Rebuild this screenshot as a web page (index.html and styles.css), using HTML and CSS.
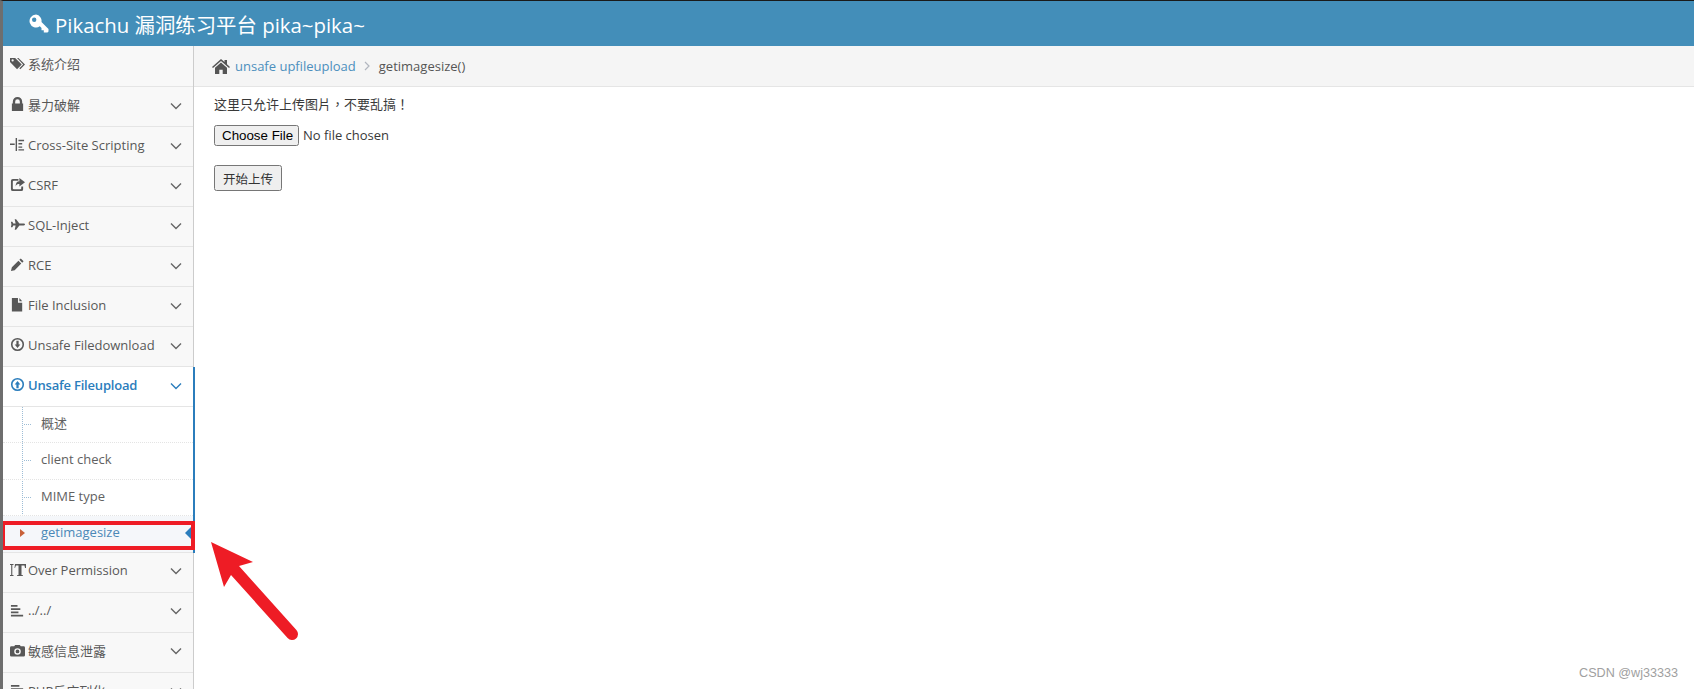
FILE: index.html
```html
<!DOCTYPE html>
<html lang="en">
<head>
  <meta charset="UTF-8">
  <meta name="viewport" content="width=device-width, initial-scale=1.0">
  <title>Pikachu</title>
  <link rel="stylesheet" href="styles.css">
</head>
<body>
  <div class="navbar">
    <svg class="key-icon" viewBox="0 0 20 20"><path d="M7 .5a6.500 6.500 0 1 0 3.800 11.800l1.700 1.700v2.200h2.300v2.300h3.700l1-1v-2.500l-7-6.900A6.500 6.500 0 0 0 7 .5zM5.200 3.500a2.200 2.200 0 1 1 0 4.400 2.200 2.200 0 0 1 0-4.400z" fill="#fff" fill-rule="evenodd"/></svg>
    <span>Pikachu 漏洞练习平台 pika~pika~</span>
  </div>

  <div class="layout">
    <div class="sidebar">
      <a class="nav-item first">
        <svg class="icon" viewBox="0 0 16 16"><path d="M0 2h5.500l7 7-5 5-7.500-7.500zM2.800 3.500a1.200 1.200 0 1 0 0 2.400 1.200 1.200 0 0 0 0-2.400zM7.500 2h1.500l7 7-5 5-1-1 4-4z" fill-rule="evenodd"/></svg>
        <span>系统介绍</span>
      </a>
      <a class="nav-item">
        <svg class="icon" viewBox="0 0 16 16"><path d="M3 7V5a5 5 0 0 1 10 0v2h1v8H2V7zm2.500 0h5V5a2.500 2.500 0 0 0-5 0z" fill-rule="evenodd"/></svg>
        <span>暴力破解</span>
        <svg class="chevron" viewBox="0 0 12 8"><path d="M1 1.500l5 5 5-5"/></svg>
      </a>
      <a class="nav-item">
        <svg class="icon" viewBox="0 0 16 16"><path d="M6 1h1.500v14H6zM9 3h6v1.500H9zM9 6.500h4V8H9zM9 10h4v1.500H9zM9 13h6v1.500H9zM0 7h5v1.500H0z"/></svg>
        <span>Cross-Site Scripting</span>
        <svg class="chevron" viewBox="0 0 12 8"><path d="M1 1.500l5 5 5-5"/></svg>
      </a>
      <a class="nav-item">
        <svg class="icon" viewBox="0 0 16 16"><path d="M3 2h6v2H4a1 1 0 0 0-1 1v7a1 1 0 0 0 1 1h7a1 1 0 0 0 1-1v-2h2v3a2 2 0 0 1-2 2H3a2 2 0 0 1-2-2V4a2 2 0 0 1 2-2zM10 1l6 4.500-6 4.500V7.500c-2 0-3.500.5-4 2.500 0-3.500 1.500-5.500 4-5.500z"/></svg>
        <span>CSRF</span>
        <svg class="chevron" viewBox="0 0 12 8"><path d="M1 1.500l5 5 5-5"/></svg>
      </a>
      <a class="nav-item">
        <svg class="icon" viewBox="0 0 16 16"><path d="M1 5h1.500l1 2H6L5 2.500h1.500L10 7h4.500c.8 0 1.500.5 1.500 1s-.7 1-1.500 1H10l-3.500 4.500H5L6 9H3.500l-1 2H1l.5-3z"/></svg>
        <span>SQL-Inject</span>
        <svg class="chevron" viewBox="0 0 12 8"><path d="M1 1.500l5 5 5-5"/></svg>
      </a>
      <a class="nav-item">
        <svg class="icon" viewBox="0 0 16 16"><path d="M11.500 1.500l3 3L13 6l-3-3zM9 4l3 3-7 7-4 1 1-4z"/></svg>
        <span>RCE</span>
        <svg class="chevron" viewBox="0 0 12 8"><path d="M1 1.500l5 5 5-5"/></svg>
      </a>
      <a class="nav-item">
        <svg class="icon" viewBox="0 0 16 16"><path d="M2 1h6.500v5H13v9.500H2zM10 1l3 3.500h-3z"/></svg>
        <span>File Inclusion</span>
        <svg class="chevron" viewBox="0 0 12 8"><path d="M1 1.500l5 5 5-5"/></svg>
      </a>
      <a class="nav-item">
        <svg class="icon" viewBox="0 0 16 16"><path d="M8 1a7 7 0 1 1 0 14A7 7 0 0 1 8 1zm0 1.700a5.300 5.300 0 1 0 0 10.600A5.300 5.300 0 0 0 8 2.700zM6.800 4h2.400v4H11l-3 3.800L5 8h1.800z" fill-rule="evenodd"/></svg>
        <span>Unsafe Filedownload</span>
        <svg class="chevron" viewBox="0 0 12 8"><path d="M1 1.500l5 5 5-5"/></svg>
      </a>

      <div class="nav-group">
        <a class="nav-item open">
          <svg class="icon" viewBox="0 0 16 16"><path d="M8 1a7 7 0 1 1 0 14A7 7 0 0 1 8 1zm0 1.700a5.300 5.300 0 1 0 0 10.600A5.300 5.300 0 0 0 8 2.700zM6.800 12V8H5l3-3.800L11 8H9.200v4z" fill-rule="evenodd"/></svg>
          <span>Unsafe Fileupload</span>
          <svg class="chevron" viewBox="0 0 12 8"><path d="M1 1.500l5 5 5-5"/></svg>
        </a>
        <ul class="submenu">
          <li>概述</li>
          <li>client check</li>
          <li>MIME type</li>
          <li class="current">getimagesize</li>
        </ul>
      </div>

      <a class="nav-item">
        <svg class="icon icon-wide" viewBox="0 0 16 16"><path d="M0 2h3.500v1H2.300v10h1.200v1H0v-1h1.200V3H0zM5 2h11v4h-1l-.5-2.500h-3V13l1.500.3V14H7v-.7l1.500-.3V3.500h-2.500L5 6H4.500z"/></svg>
        <span>Over Permission</span>
        <svg class="chevron" viewBox="0 0 12 8"><path d="M1 1.500l5 5 5-5"/></svg>
      </a>
      <a class="nav-item">
        <svg class="icon" viewBox="0 0 16 16"><path d="M1 2h7v2H1zM1 5.500h10v2H1zM1 9h8v2H1zM1 12.500h13v2H1z"/></svg>
        <span>../../</span>
        <svg class="chevron" viewBox="0 0 12 8"><path d="M1 1.500l5 5 5-5"/></svg>
      </a>
      <a class="nav-item">
        <svg class="icon" viewBox="0 0 16 16"><path d="M1.500 3.500h3L5.500 2h5l1 1.500h3A1.500 1.500 0 0 1 16 5v8a1.500 1.500 0 0 1-1.500 1.500h-13A1.500 1.500 0 0 1 0 13V5a1.500 1.500 0 0 1 1.500-1.500zM8 5.500a3.500 3.500 0 1 0 0 7 3.500 3.500 0 0 0 0-7zm0 1.500a2 2 0 1 1 0 4 2 2 0 0 1 0-4z" fill-rule="evenodd"/></svg>
        <span>敏感信息泄露</span>
        <svg class="chevron" viewBox="0 0 12 8"><path d="M1 1.500l5 5 5-5"/></svg>
      </a>
      <a class="nav-item">
        <svg class="icon" viewBox="0 0 16 16"><path d="M1 2h9v2H1zM1 5.500h13v2H1zM1 9h11v2H1zM1 12.500h8v2H1z"/></svg>
        <span>PHP反序列化</span>
        <svg class="chevron" viewBox="0 0 12 8"><path d="M1 1.500l5 5 5-5"/></svg>
      </a>
    </div>

    <div class="main">
      <div class="breadcrumbs">
        <svg class="home-icon" viewBox="0 0 18 15"><path d="M9 0l3.500 3V1H15v4.200L18 8l-1 1.100-8-7-8 7L0 8zM9 3.500l6 5.200V15h-4.300v-4.300H7.300V15H3V8.700z"/></svg>
        <a class="crumb-link">unsafe upfileupload</a>
        <svg class="crumb-sep" viewBox="0 0 6 10"><path d="M1 1l4 4-4 4"/></svg>
        <span>getimagesize()</span>
      </div>
      <div class="page-content">
        <p class="notice">这里只允许上传图片，不要乱搞！</p>
        <form class="upload-form">
          <input type="file" class="file-input">
          <button type="button" class="submit-btn">开始上传</button>
        </form>
      </div>
    </div>
  </div>

  <!-- annotation drawn over the screenshot -->
  <svg class="annotation" viewBox="0 0 1694 689">
    <rect x="3" y="523" width="190" height="25" fill="none" stroke="#ee1c25" stroke-width="4"/>
    <path d="M211 542L253 562 239 566 296.400 629.900A6 6 0 0 1 287.600 638.100L231 575 224 587z" fill="#ee1c25"/>
  </svg>
  <div class="watermark">CSDN @wj33333</div>
</body>
</html>
```

FILE: styles.css
```css
html, body {
  height: 100%;
}
body {
  margin: 0;
  position: relative;
  height: 100vh;
  overflow: hidden;
  display: flex;
  flex-direction: column;
  box-sizing: border-box;
  border-top: 1px solid #1a1a1a;
  border-left: 3px solid #6e6e6e;
  background: #fff;
  font-family: "Open Sans", "Noto Sans CJK SC", sans-serif;
  font-size: 13px;
  color: #393939;
}
.navbar {
  flex: none;
  height: 45px;
  display: flex;
  align-items: center;
  gap: 6px;
  padding-left: 26px;
  background-color: #438eb9;
  color: #fff;
  font-size: 20.400px;
}
.key-icon {
  width: 20px;
  height: 20px;
}
.layout {
  flex: 1;
  display: flex;
  min-height: 0;
}

/* Sidebar */
.sidebar {
  flex: none;
  width: 190px;
  background-color: #f2f2f2;
  border-right: 1px solid #cccccc;
}
.nav-item {
  box-sizing: border-box;
  height: 40px;
  display: flex;
  align-items: center;
  padding: 0 11px 4px 8px;
  background-color: #f8f8f8;
  border-bottom: 1px solid #e5e5e5;
  color: #585858;
}
.nav-item.first {
  height: 41px;
  padding-bottom: 5px;
}
.nav-item .icon {
  flex: none;
  width: 15px;
  height: 15px;
  margin: 0 3px 0 -1px;
  fill: #585858;
}
.nav-item .icon-wide {
  width: 16px;
  height: 16px;
  margin: 0 2px 0 -1px;
}
.nav-item .chevron {
  flex: none;
  margin: 2px 0 0 auto;
  width: 12px;
  height: 8px;
  fill: none;
  stroke: #666;
  stroke-width: 1.400;
}
.nav-group {
  position: relative;
  border-right: 2px solid #2b7dbc;
  margin-right: -2px;
  background: #fff;
}
.nav-item.open {
  background: #fff;
  color: #2b7dbc;
  font-weight: 600;
  letter-spacing: -0.2px;
}
.nav-item.open .icon {
  fill: #2b7dbc;
}
.nav-item.open .chevron {
  stroke: #2b7dbc;
}
.submenu {
  list-style: none;
  margin: 0;
  padding: 0;
  position: relative;
  border-bottom: 1px solid #e5e5e5;
}
.submenu::before {
  content: "";
  position: absolute;
  left: 19px;
  top: 0;
  bottom: 0;
  border-left: 1px dotted #9dbdd6;
}
.submenu li {
  position: relative;
  height: 36.333px;
  line-height: 33px;
  box-sizing: border-box;
  padding-left: 38px;
  border-bottom: 1px dotted #e4e4e4;
  color: #616161;
}
.submenu li::before {
  content: "";
  position: absolute;
  left: 21px;
  top: 17px;
  width: 7px;
  border-top: 1px dotted #9dbdd6;
}
.submenu li.current {
  color: #4b88b7;
  background-color: #f5f7fa;
  border-bottom: none;
  height: 36px;
}
.submenu li.current::before {
  left: 17px;
  top: 13px;
  width: 0;
  border: 4.500px solid transparent;
  border-left: 5px solid #c86139;
  border-right: none;
}
/* blue notch on the right of the current page */
.submenu li.current::after {
  content: "";
  position: absolute;
  right: -2px;
  top: 7px;
  width: 10px;
  height: 20px;
  background: #2b7dbc;
  clip-path: polygon(100% 0, 100% 100%, 0 50%);
}

/* Main area */
.main {
  flex: 1;
  min-width: 0;
}
.breadcrumbs {
  box-sizing: border-box;
  height: 41px;
  display: flex;
  align-items: center;
  padding-left: 18px;
  background-color: #f5f5f5;
  border-bottom: 1px solid #e5e5e5;
  color: #555;
}
.home-icon {
  width: 18px;
  height: 15px;
  margin-right: 5px;
  fill: #555;
}
.crumb-link {
  color: #4c8fbd;
}
.crumb-sep {
  width: 6px;
  height: 10px;
  margin: 0 8.500px;
  fill: none;
  stroke: #b2b6bf;
  stroke-width: 1.200;
}
.page-content {
  padding: 9px 20px;
}
.notice {
  margin: 0;
  line-height: 17px;
  font-family: "Open Sans", "Noto Sans CJK TC", sans-serif;
}
.upload-form {
  display: flex;
  flex-direction: column;
  align-items: flex-start;
}
.file-input {
  margin-top: 12px;
  font-family: "Open Sans", sans-serif;
  font-size: 13px;
  color: #393939;
}
.file-input::file-selector-button {
  font-family: "Liberation Sans", sans-serif;
  font-size: 13.333px;
  width: 85px;
  height: 21px;
  margin-right: 4px;
}
.submit-btn {
  margin-top: 19px;
  width: 68px;
  height: 26px;
  padding: 0;
  font-family: "Noto Sans CJK SC", sans-serif;
  font-size: 12.500px;
  color: #333;
}

/* Overlays */
.annotation {
  position: absolute;
  left: -3px;
  top: -1px;
  width: 1694px;
  height: 689px;
  pointer-events: none;
}
.watermark {
  position: absolute;
  right: 16px;
  bottom: 9px;
  font-family: "Liberation Sans", sans-serif;
  font-size: 12.600px;
  color: #a0a0a0;
}
```
